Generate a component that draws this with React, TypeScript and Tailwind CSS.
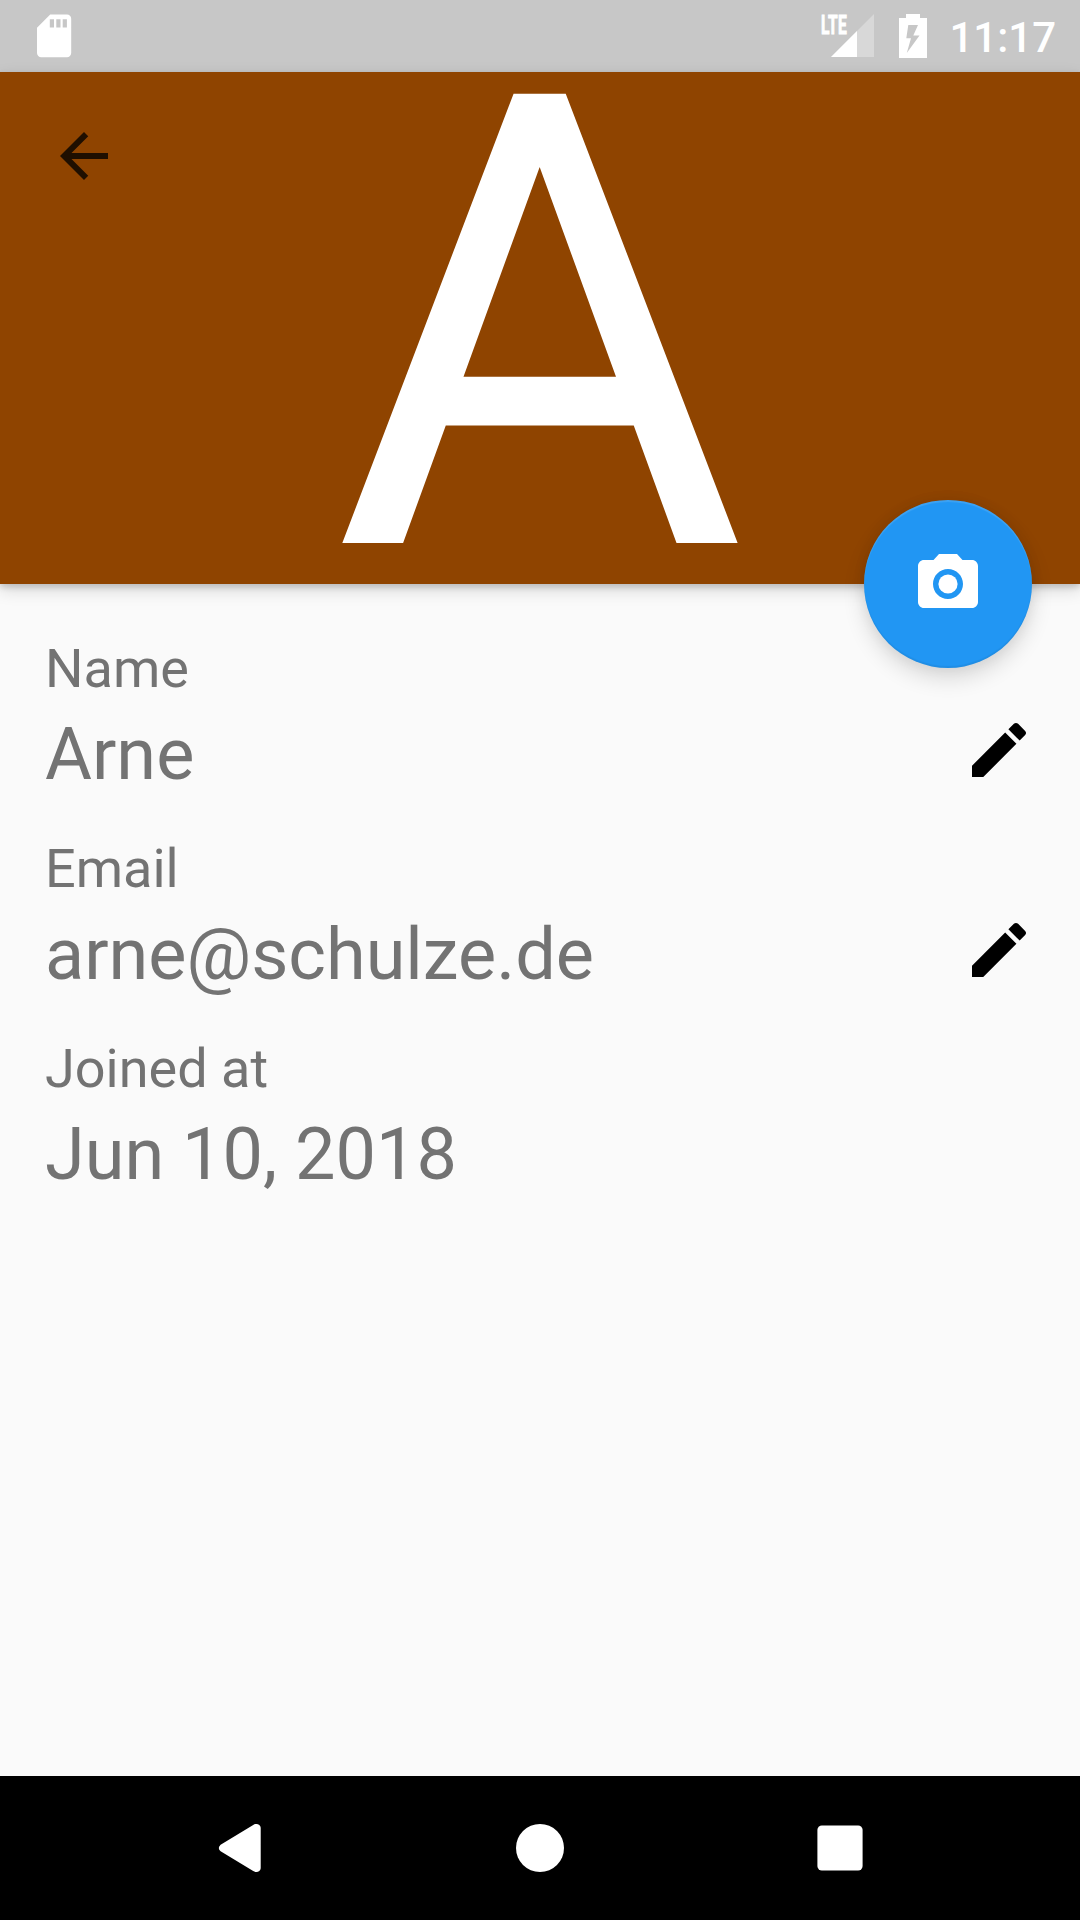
import React from "react";

function SdCardIcon() {
  return (
    <svg className="block h-11 w-9" viewBox="36 14 36 44" aria-hidden="true">
      <path
        fill="#fff"
        fillRule="evenodd"
        d="M50.2 14.5H67a4.2 4.2 0 0 1 4.2 4.2V53a4.2 4.2 0 0 1-4.2 4.2H41.2A4.2 4.2 0 0 1 37 53V27.7Zm-.4 4.7v8.3H54v-8.3Zm6.5 0v8.3h4.2v-8.3Zm6.4 0v8.3h4.2v-8.3Z"
      />
    </svg>
  );
}

function SignalIcon() {
  return (
    <div className="relative h-[72px] w-[56px]">
      <svg className="block h-[72px] w-[56px]" viewBox="820 0 56 72" aria-hidden="true">
        <path fill="#fff" fillOpacity=".3" d="M874 14v43H831Z" />
        <path fill="#fff" d="M857 31v26H831Z" />
      </svg>
      <span className="absolute left-[1px] top-[12px] origin-left scale-x-[0.6] text-[26px] font-bold leading-[26px] tracking-[0.5px] text-white [-webkit-text-stroke:1px_white]">
        LTE
      </span>
    </div>
  );
}

function BatteryIcon() {
  return (
    <svg className="block h-[72px] w-7" viewBox="899 0 28 72" aria-hidden="true">
      <path
        fill="#fff"
        fillRule="evenodd"
        d="M906 14h14v4h7v40h-28V18h7ZM908.3 25l-2 13.3h4.7l-4.2 14.7L919.5 35.5h-6.2L918 25Z"
      />
    </svg>
  );
}

function PencilIcon() {
  return (
    <svg className="block size-[72px]" viewBox="0 0 24 24" aria-hidden="true">
      <path d="M3 17.25V21h3.75L17.81 9.94l-3.75-3.75L3 17.25zM20.71 7.04c.39-.39.39-1.02 0-1.41l-2.34-2.34c-.39-.39-1.02-.39-1.41 0l-1.83 1.83 3.75 3.75 1.83-1.83z" />
    </svg>
  );
}

function Field({ label, value, editable }: { label: string; value: string; editable?: boolean }) {
  return (
    <section className="h-[200px]">
      <div className="h-[63px] text-[54px] leading-[63px]">{label}</div>
      <div className="mt-[13px] flex items-start justify-between">
        <div className="h-[84px] text-[72px] leading-[84px]">{value}</div>
        {editable && (
          <button className="mt-px text-black" aria-label={"Edit " + label}>
            <PencilIcon />
          </button>
        )}
      </div>
    </section>
  );
}

export default function App() {
  return (
    <div className="flex h-[1920px] w-[1080px] flex-col bg-[#fafafa] font-['Roboto',sans-serif] text-[#737373]">
      <div className="flex h-[72px] items-center justify-between bg-[#c7c7c7] pl-9 pr-6">
        <SdCardIcon />
        <div className="flex items-center">
          <SignalIcon />
          <div className="ml-[23px]">
            <BatteryIcon />
          </div>
          <span className="ml-[22px] pt-[3px] text-[42px] font-medium leading-[50px] text-white">11:17</span>
        </div>
      </div>

      <header className="relative h-[512px] bg-[#8f4400] shadow-[0_3px_6px_rgba(0,0,0,0.16),0_6px_16px_rgba(0,0,0,0.14)]">
        <div className="flex h-full justify-center pr-px">
          <span className="text-[632px] leading-[511px] text-white">A</span>
        </div>
        <button className="absolute left-12 top-12" aria-label="Back">
          <svg className="block size-[72px]" viewBox="0 0 24 24" aria-hidden="true">
            <path fill="#1f0f00" d="M20 11H7.83l5.59-5.59L12 4l-8 8 8 8 1.41-1.41L7.83 13H20v-2z" />
          </svg>
        </button>
        <button
          className="absolute -bottom-[84px] right-12 flex size-[168px] items-center justify-center rounded-full bg-[#2196f3] shadow-[0_10px_22px_rgba(0,0,0,0.14),0_0_14px_rgba(0,0,0,0.06),inset_0_2px_1px_rgba(255,255,255,0.12),inset_0_-2px_1px_rgba(0,0,0,0.06)]"
          aria-label="Change photo"
        >
          <svg className="block size-[72px]" viewBox="0 0 24 24" fill="#fff" aria-hidden="true">
            <circle cx="12" cy="12" r="3.2" />
            <path d="M9 2L7.17 4H4c-1.1 0-2 .9-2 2v12c0 1.1.9 2 2 2h16c1.1 0 2-.9 2-2V6c0-1.1-.9-2-2-2h-3.17L15 2H9zm3 15c-2.76 0-5-2.24-5-5s2.24-5 5-5 5 2.24 5 5-2.24 5-5 5z" />
          </svg>
        </button>
      </header>

      <main className="flex-1 px-[45px] pt-[53px]">
        <Field label="Name" value="Arne" editable />
        <Field label="Email" value="arne@schulze.de" editable />
        <Field label="Joined at" value="Jun 10, 2018" />
      </main>

      <nav className="flex h-36 items-center justify-center gap-[252px] bg-black">
        <svg className="block size-12" viewBox="0 0 48 48" fill="#fff" aria-hidden="true">
          <path d="M4.6 20.7 37.2.9Q39.7-.6 41.7.2Q44.7 1.2 44.7 4V44Q44.7 46.8 41.7 47.8Q39.7 48.6 37.2 47.1L4.6 27.3Q1 24 4.6 20.7Z" />
        </svg>
        <svg className="block size-12" viewBox="0 0 48 48" fill="#fff" aria-hidden="true">
          <circle cx="24" cy="24" r="24" />
        </svg>
        <svg className="block size-12" viewBox="0 0 48 48" fill="#fff" aria-hidden="true">
          <rect x="1.4" y="1.4" width="45.2" height="45.2" rx="4.5" />
        </svg>
      </nav>
    </div>
  );
}
